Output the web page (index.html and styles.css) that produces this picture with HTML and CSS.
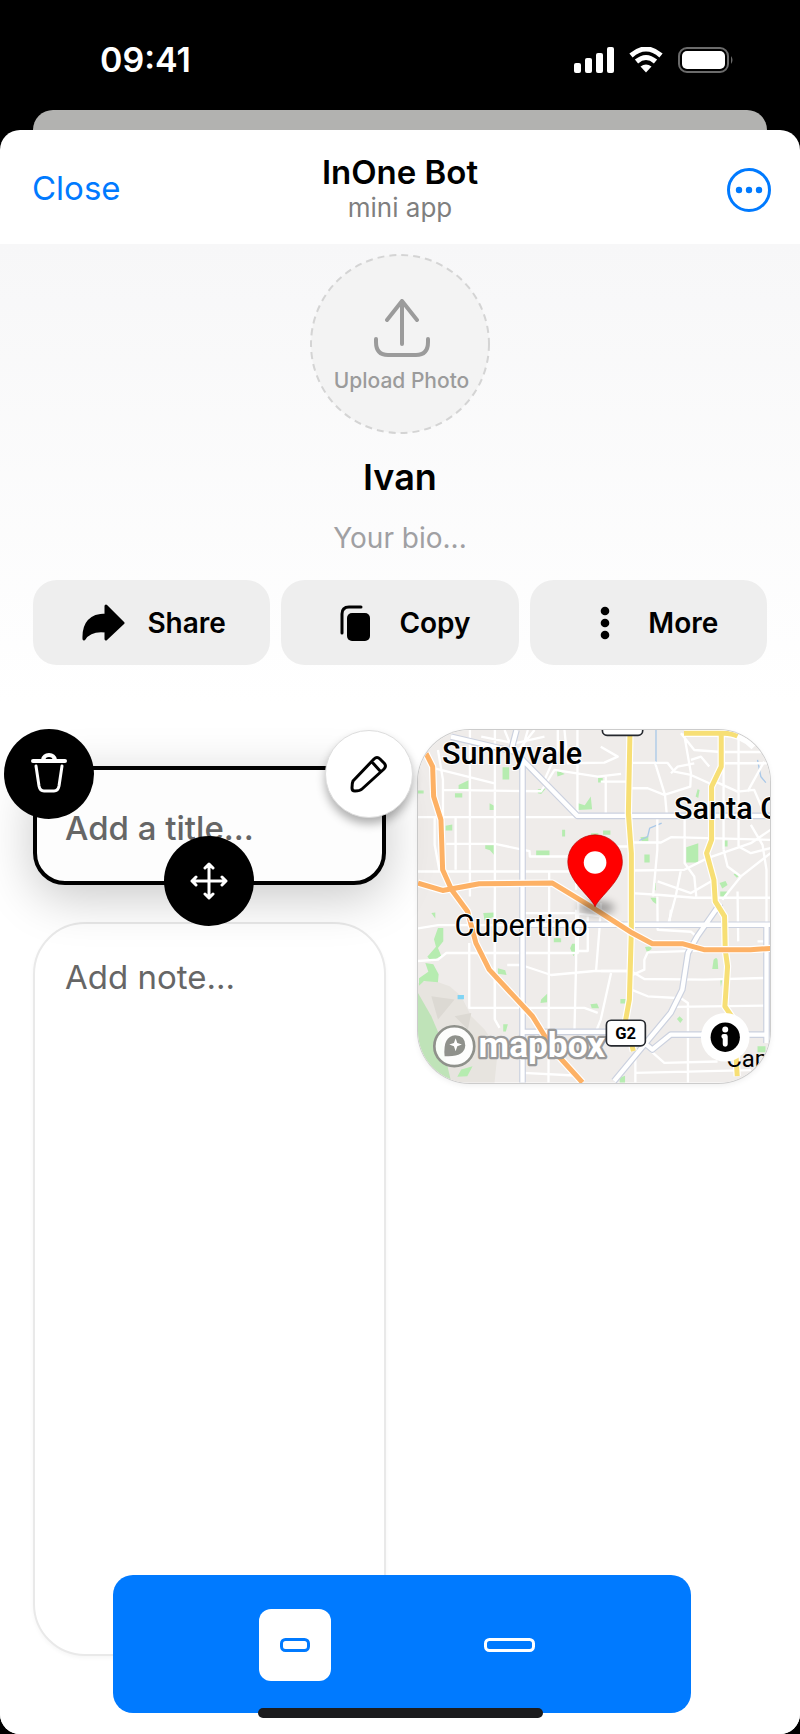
FILE: index.html
```html
<!DOCTYPE html>
<html lang="en">
<head>
  <meta charset="UTF-8" />
  <title>InOne Bot</title>
  <meta name="viewport" content="width=device-width, initial-scale=1.0"/>
  <link rel="stylesheet" href="styles.css">
</head>
<body>

<div class="status-bar">
  <span>09:41</span>
  <div class="status-icons">
    <svg width="40" height="26" viewBox="0 0 40 26" fill="#fff">
      <rect x="0" y="16" width="7" height="10" rx="2"/>
      <rect x="11" y="11" width="7" height="15" rx="2"/>
      <rect x="22" y="6" width="7" height="20" rx="2"/>
      <rect x="33" y="0" width="7" height="26" rx="2"/>
    </svg>
    <svg width="34" height="26" viewBox="0 0 34 26">
      <path d="M2 8.500Q17 -4.500 32 8.500" fill="none" stroke="#fff" stroke-width="5"/>
      <path d="M7.500 14.500Q17 6.500 26.500 14.500" fill="none" stroke="#fff" stroke-width="5"/>
      <path d="M11.500 19.500Q17 15.500 22.500 19.500L17 25.500Z" fill="#fff"/>
    </svg>
    <svg width="56" height="26" viewBox="0 0 56 26">
      <rect x="1" y="1" width="49" height="24" rx="8" fill="none" stroke="#6b6b6b" stroke-width="2"/>
      <rect x="4" y="4" width="43" height="18" rx="5" fill="#fff"/>
      <path d="M53 9Q56 13 53 17Z" fill="#6b6b6b"/>
    </svg>
  </div>
</div>
<div class="back-card"></div>

<div class="sheet">
  <header>
    <button class="close-button">Close</button>
    <div class="heading">
      <h1>InOne Bot</h1>
      <p>mini app</p>
    </div>
    <button class="menu-button" aria-label="Menu">
      <svg width="44" height="44" viewBox="0 0 44 44">
        <circle cx="22" cy="22" r="20.500" fill="none" stroke="#007aff" stroke-width="3"/>
        <g fill="#007aff"><circle cx="12" cy="22" r="3.200"/><circle cx="22" cy="22" r="3.200"/><circle cx="32" cy="22" r="3.200"/></g>
      </svg>
    </button>
  </header>

  <main>
    <section class="profile">
      <button class="avatar">
        <svg class="avatar-ring" viewBox="0 0 180 180"><circle cx="90" cy="90" r="89" fill="#f3f3f3" stroke="#d4d4d4" stroke-width="2" stroke-dasharray="7 5"/></svg>
        <svg class="avatar-icon" width="56" height="58" viewBox="0 0 56 58" fill="none" stroke="#9b9b9b" stroke-width="4" stroke-linecap="round" stroke-linejoin="round">
          <path d="M28 45V2M13 21L28 2L43 21"/>
          <path d="M2 40V43Q2 56 14 56H42Q54 56 54 43V40"/>
        </svg>
        <span>Upload Photo</span>
      </button>
      <h2>Ivan</h2>
      <input class="bio" type="text" placeholder="Your bio..." aria-label="Your bio">
      <div class="actions">
        <button>
          <svg width="43" height="38" viewBox="0 0 43 38">
            <path d="M24 2L41 19L24 35V27Q8 25 2 35Q1 11 24 11Z" stroke="#000" stroke-width="3" stroke-linejoin="round"/>
          </svg>
          Share
        </button>
        <button>
          <svg width="43" height="38" viewBox="0 0 43 38">
            <rect x="13" y="9" width="23" height="28" rx="5"/>
            <path d="M8 29V10Q8 3 15 3H27" fill="none" stroke="#000" stroke-width="3" stroke-linecap="round"/>
          </svg>
          Copy
        </button>
        <button>
          <svg width="43" height="38" viewBox="0 0 43 38">
            <circle cx="22" cy="7" r="4.300"/><circle cx="22" cy="19" r="4.300"/><circle cx="22" cy="31" r="4.300"/>
          </svg>
          More
        </button>
      </div>
    </section>

    <section class="widgets">
      <div class="column">
        <div class="title-card">
          <input type="text" placeholder="Add a title..." aria-label="Title">
          <button class="round delete" aria-label="Delete">
            <svg width="36" height="42" viewBox="0 0 36 42" fill="none" stroke="#fff" stroke-width="3" stroke-linecap="round" stroke-linejoin="round">
              <path d="M2 8H34M12 7Q13 2 18 2Q23 2 24 7" stroke-width="4"/>
              <path d="M5 13L8 33Q9 38 13 38H23Q27 38 28 33L31 13"/>
            </svg>
          </button>
          <button class="round edit" aria-label="Edit">
            <svg width="38" height="38" viewBox="0 0 38 38" fill="none" stroke="#000" stroke-width="3" stroke-linejoin="round">
              <path d="M3 26L24 4Q27 1 30 4L34 8Q37 11 34 14L12 34Q10 36 5 36Q2 36 2 33Q2 28 3 26ZM22 7L31 17"/>
            </svg>
          </button>
          <button class="round move" aria-label="Move">
            <svg width="38" height="38" viewBox="0 0 38 38" fill="none" stroke="#fff" stroke-width="3" stroke-linecap="round" stroke-linejoin="round">
              <path d="M19 3V35M3 19H35M15 6L19 2L23 6M15 32L19 36L23 32M6 15L2 19L6 23M32 15L36 19L32 23"/>
            </svg>
          </button>
        </div>
        <textarea class="note-card" placeholder="Add note..." aria-label="Note"></textarea>
      </div>

      <div class="map">
        <svg viewBox="0 0 1059 1059" role="img" aria-label="Map of Cupertino">
          <defs>
            <filter id="soft" x="-50%" y="-50%" width="200%" height="200%"><feGaussianBlur stdDeviation="12"/></filter>
          </defs>
          <rect width="1059" height="1059" fill="#efecea"/>

          <!-- hills -->
          <path d="M0 760L40 750L95 770L130 800L160 860L200 900L240 960L230 1059H0Z" fill="#e7e4df"/>
          <path d="M0 790L40 860L70 930L100 1059H0Z" fill="#bfe3b8"/>
          <path d="M40 800L110 810L60 870ZM110 860L160 850L150 900Z" fill="#dcd9d3"/>

          <!-- parks -->
          <g fill="#b6ecb0">
            <path d="M254 112h20v37h-20zM122 165l30-14v26h-30zM111 190h22v13h-22zM215 220l15 8v12h-15zM83 288l20-4v18h-20zM202 346h28v31l-14-16-14-4zM355 362h40v17h-40zM433 300h9v20h-9zM360 178l24-2-14 16-10-2zM417 120l24 12-22 8zM481 220l20 6 18-26 4 38-42 2zM541 144h14v14h-14zM0 182h17v9H0zM520 310h22v9h-22zM556 302h22v13h-22z"/>
            <path d="M840 178l6 2-4 24-8-4zM806 352l36-12v58h-36zM680 374h16v24h-16zM668 322l24-2v14h-20zM920 332h10v18h-10zM706 460l8 0v22l-8-6zM698 504h22v22l-14-10zM948 434l8-6 10 8-8 8zM906 460l18-6 6 12-16 10zM908 485l22 0-8 18-14-2z"/>
            <path d="M60 595h16v40l-16 20 10 24-30 16-12-14 26-30-6-22zM22 700l24 4 16 30-2 24-42-4-15 14 0-22 28-20zM196 550l34-2v12l-30 12zM240 716l22 6 4 14-26-4zM370 810l18-18v26l-20 2zM457 656l6-14h18v12l-14 26zM408 626h22v12h-22zM518 824l20-2 6 14h-22zM256 884h14l-6 22h-8zM40 550l12-2v18zM130 1020l34-10-16 30-30 2z"/>
            <path d="M682 652l18-2 2 8-14 10zM888 690q9-10 12 0l2 28h-18zM908 750h6l-4 22zM778 868l8-8 10 10-8 10zM608 808h16v14h-16zM1020 950h24v18h-24zM606 1045l16-6v20h-16z"/>
          </g>
          <path d="M119 796h19v13h-19z" fill="#80d4f4"/>
          <path d="M715 0V112M732 280L696 295L690 320L665 332M1020 90L1030 140L1045 158" fill="none" stroke="#a9c8e8" stroke-width="4"/>

          <!-- local streets -->
          <g fill="none" stroke="#fff" stroke-width="7" stroke-linejoin="round">
            <path d="M0 262H480M60 60L75 150V262M156 0V420M231 0V870L245 895M50 115L230 160M75 180L370 184L410 120L540 140L610 132M380 150L420 60V0M50 262V345L65 425M113 262V420M85 342H232L335 364L336 380H480M0 425H550M190 20L290 40L380 20M440 0L450 100L560 98L600 80L549 50M479 255V0"/>
            <path d="M260 0L290 75L350 0M330 0L310 70M156 500V420M394 425V500L392 1059M475 480L476 370M564 140V260M549 155H640"/>
            <path d="M0 596L60 586H316M0 694L60 690L85 670H480L482 500M231 510V870M154 640V835H500L540 850M268 706H310L400 736L530 724H640M475 540V700L470 905M550 520L545 600L535 722M316 550H470L549 560M510 560V664H480M580 730L549 870L535 905M316 1030L470 1038L490 1059"/>
            <path d="M641 99H750L770 125L820 135L875 160M799 10L820 130L818 170L740 195L690 175H641M711 95L742 195L748 260M790 10L830 60L911 66H1059M830 100L780 110L760 130M875 110L850 80L820 90M911 100H1059M963 20V350M918 60V360M882 150L960 185L1010 180L1040 250L1059 260M990 185L1040 95"/>
            <path d="M641 338H730L760 322L1059 330M719 262V360L706 500M801 262V400L830 440L836 500M641 422L800 420L870 385L1000 340L1059 300M918 360L930 410L970 440M963 350L1000 370L1059 355M1000 285L1035 345L1047 420V585M970 440L914 510M970 440L1059 370M641 490L720 495L830 504H1059M790 420L774 500L750 590M889 450L820 490L720 455M960 485L962 635M641 350H601L549 380"/>
            <path d="M719 500L720 600L820 606L836 620M760 540L755 580M640 738L680 720V690L690 668L870 662M641 725L680 748L860 750L1040 745M641 780L690 800L790 806L811 820V1059M770 832L1040 828M653 960V1059M653 1030L1000 1022M700 965L740 1000L900 996M549 724H640M1020 635H1059"/>
          </g>

          <!-- expressways -->
          <g fill="none" stroke="#cbd1df" stroke-width="20" stroke-linejoin="round">
            <path d="M99 20L290 65L479 258H1059M296 0L279 65M314 85V1059M316 585H1059M909 520L839 620L811 670L794 780L759 850L589 1055M316 907H564L680 940L704 960L759 915H1047M1047 585V940"/>
          </g>
          <g fill="none" stroke="#fff" stroke-width="13" stroke-linejoin="round">
            <path d="M99 20L290 65L479 258H1059M296 0L279 65M314 85V1059M316 585H1059M909 520L839 620L811 670L794 780L759 850L589 1055M316 907H564L680 940L704 960L759 915H1047M1047 585V940"/>
          </g>

          <!-- highways -->
          <g fill="none" stroke-linejoin="round">
            <path d="M637 0L632 250L641 370V600L635 810L624 870L647 965M799 10H909Q970 8 1010 50M911 10V110L882 170V330L867 370L889 450L893 515L921 560L923 660L930 710L922 830L949 870L959 1040" stroke="#fff" stroke-width="22"/>
            <path d="M637 0L632 250L641 370V600L635 810L624 870L647 965M799 10H909Q940 8 960 18M911 10V110L882 170V330L867 370L889 450L893 515L921 560L923 660L930 710L922 830L949 870L959 1040" stroke="#f7df75" stroke-width="15"/>
            <path d="M24 70L44 110L47 200L69 270L74 420L101 480L149 545L174 640L214 720L344 860L409 965L494 1059M0 460L74 482L184 462L404 460L519 530L644 610L704 642H794L859 660H999L1059 656" stroke="#fff" stroke-width="22"/>
            <path d="M24 70L44 110L47 200L69 270L74 420L101 480L149 545L174 640L214 720L344 860L409 965L494 1059M0 460L74 482L184 462L404 460L519 530L644 610L704 642H794L859 660H999L1059 656" stroke="#fdb165" stroke-width="15"/>
          </g>

          <!-- mapbox logo -->
          <circle cx="109" cy="950" r="60" fill="#fff" fill-opacity=".9" stroke="#8f918b" stroke-width="8"/>
          <path d="M80 980Q74 920 112 917Q142 918 142 948Q140 984 80 980Z" fill="#8f918b"/>
          <path d="M113 926L118 940L132 945L118 950L113 965L108 950L94 945L108 940Z" fill="#fff"/>
          <text class="map-brand" x="182" y="983">mapbox</text>

          <!-- shields -->
          <rect x="554" y="-60" width="121" height="76" rx="14" fill="#fff" stroke="#25282e" stroke-width="5"/>
          <rect x="566" y="872" width="117" height="77" rx="14" fill="#fff" stroke="#25282e" stroke-width="5"/>
          <text class="shield-label" x="624" y="929">G2</text>

          <text class="city main" x="72" y="103">Sunnyvale</text>
          <text class="city main" x="769" y="268">Santa C</text>
          <text class="city" x="110" y="618">Cupertino</text>
          <text class="town" x="926" y="1013">Cam</text>

          <!-- pin -->
          <ellipse cx="536" cy="534" rx="54" ry="20" fill="#000" opacity=".35" filter="url(#soft)"/>
          <path d="M532 531C520 500 450 455 450 395A82 80 0 0 1 614 395C614 455 544 500 532 531Z" fill="#f00" stroke="#b80000" stroke-width="2"/>
          <circle cx="532" cy="398" r="34" fill="#fff"/>

          <circle cx="923" cy="923" r="73" fill="#fff"/>
          <circle cx="923" cy="923" r="44"/>
          <circle cx="923" cy="900" r="9" fill="#fff"/>
          <path d="M919 921H923V944" fill="none" stroke="#fff" stroke-width="15" stroke-linecap="round" stroke-linejoin="round"/>
        </svg>
      </div>
    </section>
  </main>

  <div class="size-bar">
    <button class="selected" aria-label="Small">
      <svg width="30" height="14" viewBox="0 0 30 14"><rect x="1.500" y="1.500" width="27" height="11" rx="4" fill="none" stroke="#007aff" stroke-width="3"/></svg>
    </button>
    <button aria-label="Wide">
      <svg width="51" height="14" viewBox="0 0 51 14"><rect x="1.500" y="1.500" width="48" height="11" rx="4" fill="none" stroke="#fff" stroke-width="3"/></svg>
    </button>
  </div>
  <div class="home-indicator"></div>
</div>

</body>
</html>
```

FILE: styles.css
```css
* {
  box-sizing: border-box;
}

body {
  margin: 0;
  font-family: Inter, "Liberation Sans", sans-serif;
  background-color: #000;
  color: #000;
}

button {
  border: none;
  background: none;
  padding: 0;
  font-family: inherit;
  color: inherit;
  cursor: pointer;
}

input,
textarea {
  border: none;
  background: none;
  padding: 0;
  font-family: inherit;
  outline: none;
}

svg {
  display: block;
}

.status-bar {
  display: flex;
  justify-content: space-between;
  align-items: center;
  padding: 35px 66px 25px 100px;
  color: #fff;
  font-size: 34px;
  font-weight: 600;
  line-height: 50px;
}

.status-icons {
  display: flex;
  gap: 15px;
}

.back-card {
  height: 20px;
  margin: 0 33px;
  background-color: #b2b2b0;
  border-radius: 20px 20px 0 0;
}

.sheet {
  position: relative;
  background-color: #fff;
  border-radius: 20px;
  overflow: hidden;
}

header {
  display: grid;
  grid-template-columns: 1fr auto 1fr;
  align-items: center;
  padding: 24px 29px 18px;
}

.close-button {
  justify-self: start;
  padding: 0 0 5px 3px;
  font-size: 33px;
  color: #007aff;
}

.heading {
  text-align: center;
  line-height: 36px;
}

.heading h1 {
  margin: 0;
  font-size: 33px;
  font-weight: 600;
}

.heading p {
  margin: 0;
  font-size: 26px;
  color: #7f7f7f;
}

.menu-button {
  justify-self: end;
}

main {
  padding-bottom: 78px;
  background: linear-gradient(#f7f7f8, #fff 460px);
}

.profile {
  display: flex;
  flex-direction: column;
  align-items: center;
  padding: 10px 33px 0;
}

.avatar {
  position: relative;
  display: flex;
  flex-direction: column;
  align-items: center;
  gap: 12px;
  width: 180px;
  height: 180px;
  padding: 45px 0 0 3px;
  font-size: 21px;
  font-weight: 500;
  line-height: 24px;
  white-space: nowrap;
  color: #9b9b9b;
}

.avatar-ring {
  position: absolute;
  inset: 0;
}

.avatar-icon,
.avatar span {
  position: relative;
}

.profile h2 {
  margin: 21px 0;
  font-size: 36px;
  font-weight: 600;
  line-height: 44px;
}

.bio {
  width: 100%;
  height: 36px;
  font-size: 28px;
  text-align: center;
}

.bio::placeholder {
  color: #a0a0a3;
  opacity: 1;
}

.actions {
  display: grid;
  grid-template-columns: repeat(3, 1fr);
  gap: 11px;
  width: 100%;
  margin-top: 24px;
}

.actions button {
  display: flex;
  justify-content: center;
  align-items: center;
  gap: 22px;
  height: 85px;
  padding-left: 5px;
  border-radius: 24px;
  background-color: #eee;
  font-size: 28px;
  font-weight: 600;
}

.widgets {
  display: grid;
  grid-template-columns: 1fr 1fr;
  align-items: start;
  gap: 32px;
  padding: 65px 30px 0 33px;
}

.column {
  display: flex;
  flex-direction: column;
  gap: 37px;
  padding-top: 36px;
}

.title-card {
  position: relative;
  display: flex;
  align-items: center;
  padding: 36px 28px 32px;
  border: 4px solid #000;
  border-radius: 32px;
  background-color: #fdfdfd;
  box-shadow: 0 12px 50px rgba(0, 0, 0, 0.22);
}

.title-card input {
  width: 100%;
  height: 43px;
  font-size: 33px;
  font-weight: 500;
}

.title-card input::placeholder,
.note-card::placeholder {
  color: #666;
  opacity: 1;
}

.round {
  position: absolute;
  display: flex;
  justify-content: center;
  align-items: center;
  width: 90px;
  height: 90px;
  border-radius: 50%;
  background-color: #000;
}

.delete {
  left: -33px;
  top: -41px;
}

.edit {
  right: -31px;
  top: -40px;
  width: 88px;
  height: 88px;
  border: 1px solid #ddd;
  background-color: #fff;
  box-shadow: 0 6px 10px rgba(0, 0, 0, 0.3);
}

.move {
  left: calc(50% - 45px);
  bottom: -45px;
}

.note-card {
  width: 100%;
  min-height: 734px;
  padding: 32px 30px;
  border: 2px solid #e9e9e9;
  border-radius: 52px;
  background-color: #fff;
  box-shadow: 0 2px 4px rgba(0, 0, 0, 0.04);
  font-size: 33px;
  line-height: 42px;
  resize: none;
}

.map {
  border-radius: 52px;
  overflow: hidden;
  box-shadow: 0 0 0 1px #ccc, 0 2px 6px rgba(0, 0, 0, 0.08);
}

.map svg {
  width: 100%;
}

.map text {
  font-family: Roboto, sans-serif;
}

.map .city {
  font-size: 92px;
  stroke: #fff;
  stroke-width: 6px;
  paint-order: stroke;
}

.map .main {
  font-weight: 500;
}

.map .town {
  font-size: 72px;
}

.map .shield-label {
  font-size: 50px;
  font-weight: 700;
  text-anchor: middle;
}

.map .map-brand {
  font-size: 106px;
  font-weight: 700;
  fill: #fff;
  stroke: #999;
  stroke-width: 14px;
  stroke-linejoin: round;
  paint-order: stroke;
}

.size-bar {
  position: absolute;
  left: 113px;
  right: 109px;
  bottom: 21px;
  display: flex;
  justify-content: center;
  gap: 142px;
  padding: 34px 0 32px;
  border-radius: 20px;
  background-color: #007aff;
}

.size-bar button {
  display: flex;
  justify-content: center;
  align-items: center;
  width: 72px;
  height: 72px;
  border-radius: 12px;
}

.size-bar .selected {
  background-color: #fff;
}

.home-indicator {
  position: absolute;
  left: 258px;
  right: 257px;
  bottom: 16px;
  height: 10px;
  border-radius: 5px;
  background-color: #1c1c1e;
}
```
